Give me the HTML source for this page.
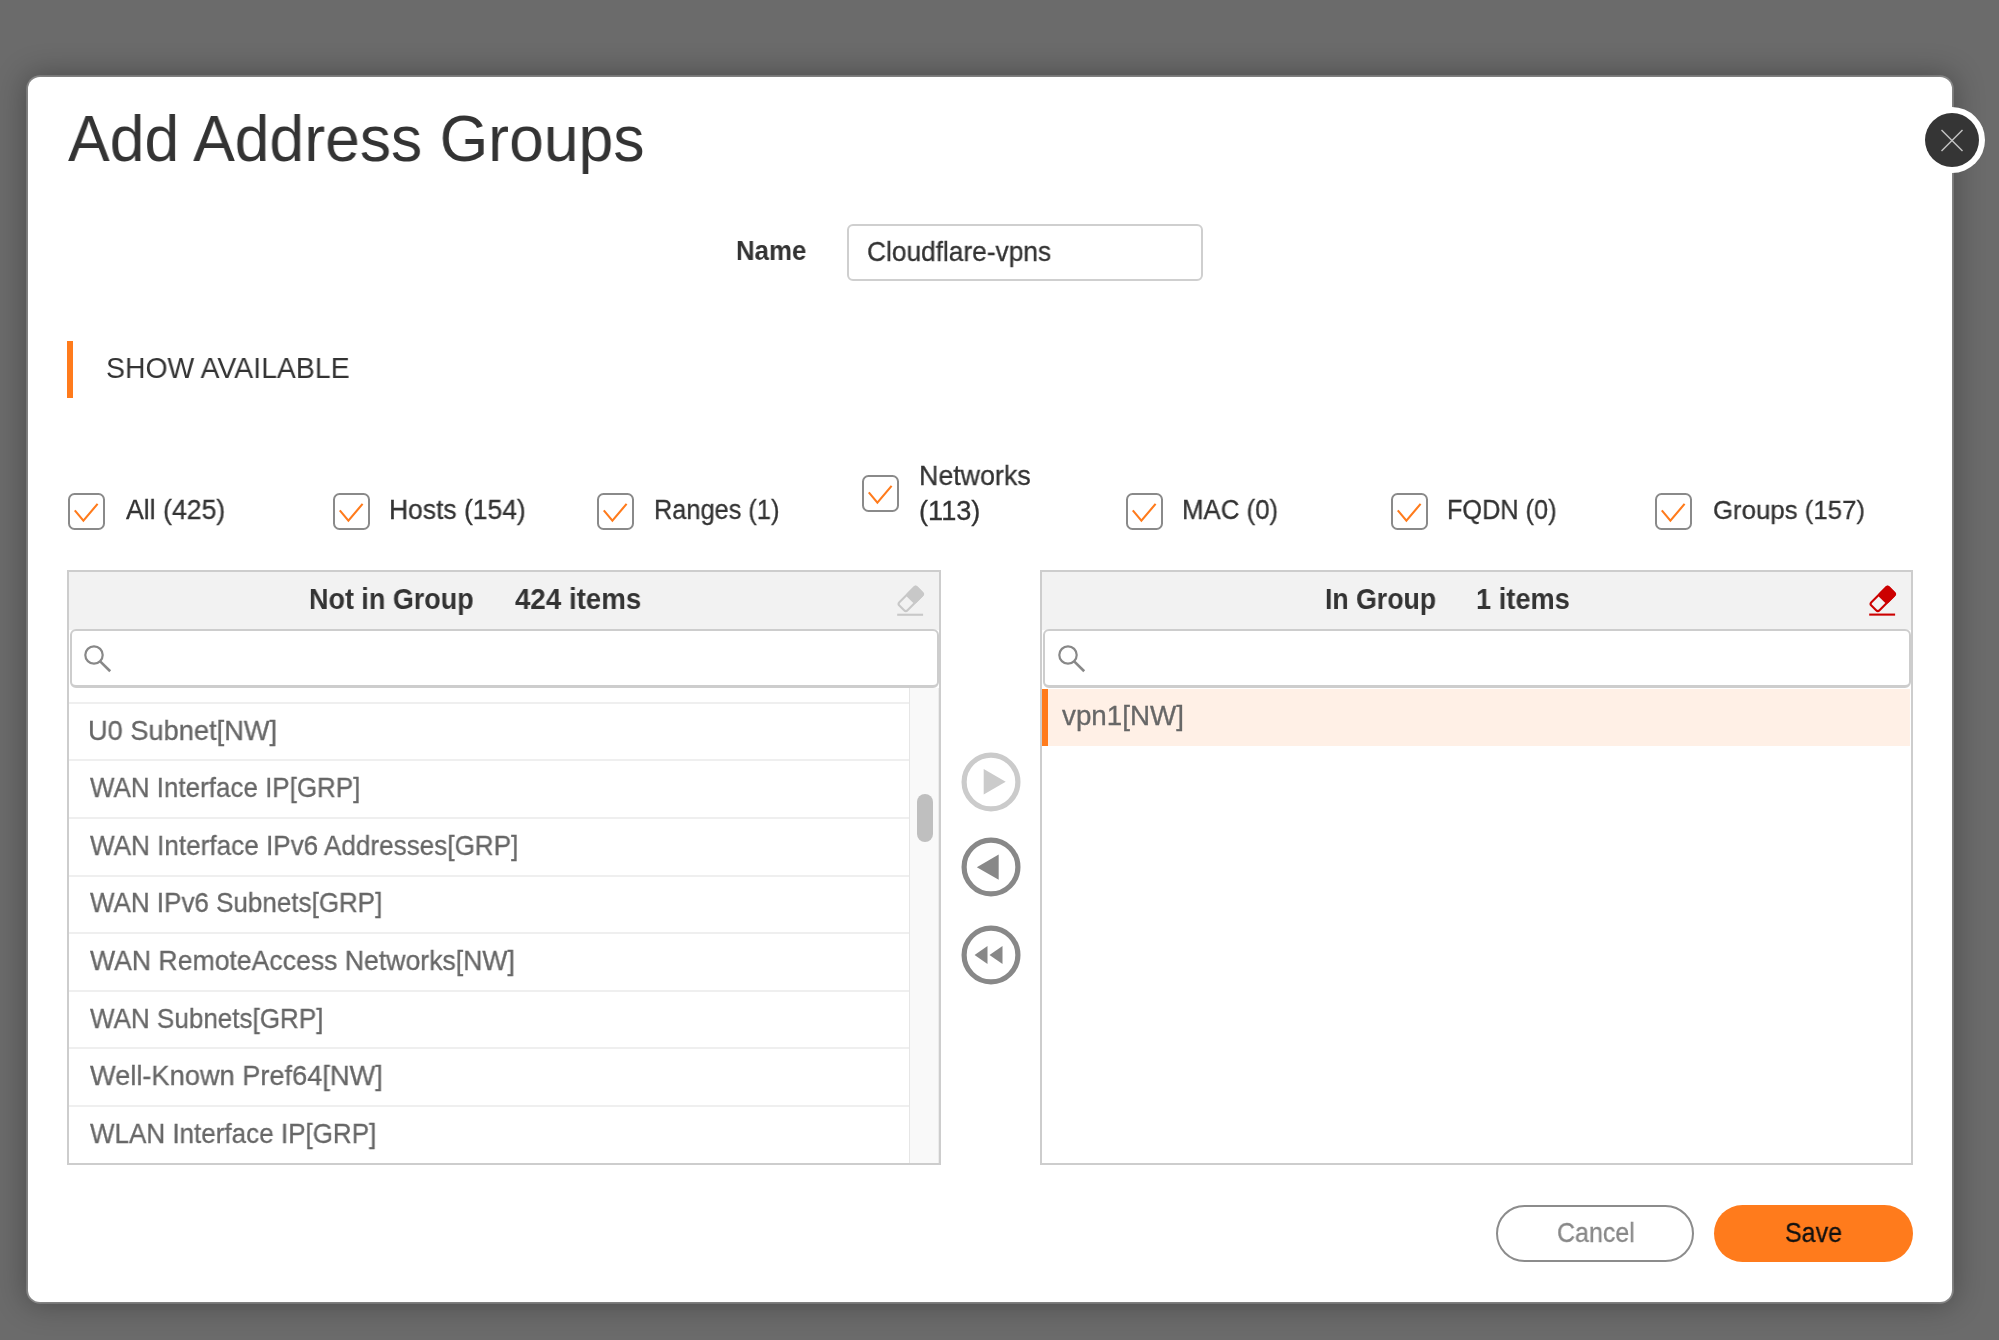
<!DOCTYPE html>
<html><head><meta charset="utf-8">
<style>
*{box-sizing:border-box;margin:0;padding:0}
html,body{width:1999px;height:1340px;overflow:hidden;background:#6b6b6b;font-family:"Liberation Sans",sans-serif;position:relative}
.abs{position:absolute}
.t{position:absolute;white-space:nowrap;line-height:1;transform-origin:0 0;font-family:"Liberation Sans",sans-serif;will-change:transform}
#modal{position:absolute;left:27.8px;top:77px;width:1924.5px;height:1225px;background:#fff;border-radius:12px;box-shadow:0 0 0 1.8px rgba(255,255,255,0.24),0 0 30px 3px rgba(0,0,0,0.3)}
#close{position:absolute;left:1919.4px;top:106.5px;width:66px;height:66px;border-radius:50%;background:#fff}
#close .in{position:absolute;left:6px;top:6px;width:54px;height:54px;border-radius:50%;background:#353535}
</style></head><body>
<div id="modal"></div>
<div id="close"><div class="in"></div><svg class="abs" style="left:0;top:0" width="66" height="66" viewBox="0 0 66 66"><line x1="22.5" y1="23" x2="43.5" y2="44" stroke="#c4c4c4" stroke-width="1.4"/><line x1="43.5" y1="23" x2="22.5" y2="44" stroke="#c4c4c4" stroke-width="1.4"/></svg></div>
<div class="t" style="left:68.0px;top:106.94px;font-size:64.78px;letter-spacing:0px;font-weight:normal;color:#333;transform:scaleX(0.9647)">Add Address Groups</div>
<div class="t" style="left:735.67px;top:238.21px;font-size:26.81px;letter-spacing:0px;font-weight:bold;color:#333;transform:scaleX(0.9643)">Name</div>
<div class="abs" style="left:846.5px;top:223.5px;width:356px;height:57px;border:2px solid #cfcfcf;border-radius:6px"></div>
<div class="t" style="left:867.04px;top:237.84px;font-size:27.25px;letter-spacing:0px;font-weight:normal;color:#333;-webkit-text-stroke:0.3px #333;transform:scaleX(0.9646)">Cloudflare-vpns</div>
<div class="abs" style="left:67.2px;top:340.5px;width:6.3px;height:57.3px;background:#ff7b1c"></div>
<div class="t" style="left:105.75px;top:353.84px;font-size:29.13px;letter-spacing:0px;font-weight:normal;color:#333;transform:scaleX(0.9749)">SHOW AVAILABLE</div>
<svg class="abs" style="left:68px;top:492.7px" width="37" height="37" viewBox="0 0 37 37"><rect x="1" y="1" width="35" height="35" rx="5.5" fill="#fff" stroke="#8a8a8a" stroke-width="2"/><polyline points="6.8,17.4 15.4,27.6 29.6,10.9" fill="none" stroke="#ff7b1c" stroke-width="2.1"/></svg>
<svg class="abs" style="left:333.2px;top:492.7px" width="37" height="37" viewBox="0 0 37 37"><rect x="1" y="1" width="35" height="35" rx="5.5" fill="#fff" stroke="#8a8a8a" stroke-width="2"/><polyline points="6.8,17.4 15.4,27.6 29.6,10.9" fill="none" stroke="#ff7b1c" stroke-width="2.1"/></svg>
<svg class="abs" style="left:596.8px;top:492.7px" width="37" height="37" viewBox="0 0 37 37"><rect x="1" y="1" width="35" height="35" rx="5.5" fill="#fff" stroke="#8a8a8a" stroke-width="2"/><polyline points="6.8,17.4 15.4,27.6 29.6,10.9" fill="none" stroke="#ff7b1c" stroke-width="2.1"/></svg>
<svg class="abs" style="left:862px;top:474.8px" width="37" height="37" viewBox="0 0 37 37"><rect x="1" y="1" width="35" height="35" rx="5.5" fill="#fff" stroke="#8a8a8a" stroke-width="2"/><polyline points="6.8,17.4 15.4,27.6 29.6,10.9" fill="none" stroke="#ff7b1c" stroke-width="2.1"/></svg>
<svg class="abs" style="left:1126.1px;top:492.7px" width="37" height="37" viewBox="0 0 37 37"><rect x="1" y="1" width="35" height="35" rx="5.5" fill="#fff" stroke="#8a8a8a" stroke-width="2"/><polyline points="6.8,17.4 15.4,27.6 29.6,10.9" fill="none" stroke="#ff7b1c" stroke-width="2.1"/></svg>
<svg class="abs" style="left:1391.4px;top:492.7px" width="37" height="37" viewBox="0 0 37 37"><rect x="1" y="1" width="35" height="35" rx="5.5" fill="#fff" stroke="#8a8a8a" stroke-width="2"/><polyline points="6.8,17.4 15.4,27.6 29.6,10.9" fill="none" stroke="#ff7b1c" stroke-width="2.1"/></svg>
<svg class="abs" style="left:1655px;top:492.7px" width="37" height="37" viewBox="0 0 37 37"><rect x="1" y="1" width="35" height="35" rx="5.5" fill="#fff" stroke="#8a8a8a" stroke-width="2"/><polyline points="6.8,17.4 15.4,27.6 29.6,10.9" fill="none" stroke="#ff7b1c" stroke-width="2.1"/></svg>
<div class="t" style="left:125.5px;top:497.21px;font-size:26.81px;letter-spacing:0px;font-weight:normal;color:#333;-webkit-text-stroke:0.3px #333;transform:scaleX(0.9949)">All (425)</div>
<div class="t" style="left:388.83px;top:497.21px;font-size:26.81px;letter-spacing:0px;font-weight:normal;color:#333;-webkit-text-stroke:0.3px #333;transform:scaleX(0.9874)">Hosts (154)</div>
<div class="t" style="left:653.51px;top:497.21px;font-size:26.81px;letter-spacing:0px;font-weight:normal;color:#333;-webkit-text-stroke:0.3px #333;transform:scaleX(0.9457)">Ranges (1)</div>
<div class="t" style="left:918.55px;top:462.09px;font-size:27.54px;letter-spacing:0px;font-weight:normal;color:#333;-webkit-text-stroke:0.3px #333;transform:scaleX(0.9732)">Networks</div>
<div class="t" style="left:919.17px;top:498.21px;font-size:26.81px;letter-spacing:0px;font-weight:normal;color:#333;-webkit-text-stroke:0.3px #333;transform:scaleX(1.014)">(113)</div>
<div class="t" style="left:1182.47px;top:497.21px;font-size:26.81px;letter-spacing:0px;font-weight:normal;color:#333;-webkit-text-stroke:0.3px #333;transform:scaleX(0.9635)">MAC (0)</div>
<div class="t" style="left:1447.41px;top:497.21px;font-size:26.81px;letter-spacing:0px;font-weight:normal;color:#333;-webkit-text-stroke:0.3px #333;transform:scaleX(0.9434)">FQDN (0)</div>
<div class="t" style="left:1712.73px;top:497.26px;font-size:26.52px;letter-spacing:0px;font-weight:normal;color:#333;-webkit-text-stroke:0.3px #333;transform:scaleX(0.9721)">Groups (157)</div>
<div class="abs" style="left:67.3px;top:570px;width:873.5px;height:595px;border:2px solid #cdcdcd;background:#fff"></div><div class="abs" style="left:69.3px;top:572px;width:869.5px;height:58px;background:#f2f2f2"></div><div class="abs" style="left:69.6px;top:629.3px;width:869.2px;height:59px;background:#fff;border:2px solid #cdcdcd;border-bottom-width:3.2px;border-radius:6px"></div>
<div class="abs" style="left:1040.4px;top:570px;width:872.2px;height:595px;border:2px solid #cdcdcd;background:#fff"></div><div class="abs" style="left:1042.4px;top:572px;width:868.2px;height:58px;background:#f2f2f2"></div><div class="abs" style="left:1042.7px;top:629.3px;width:867.9000000000001px;height:59px;background:#fff;border:2px solid #cdcdcd;border-bottom-width:3.2px;border-radius:6px"></div>
<div class="abs" style="left:69.3px;top:688.4px;width:840px;height:474.6px;overflow:hidden">
<div class="abs" style="left:0;top:13.40px;width:840px;height:2px;background:#efefef"></div>
<div class="abs" style="left:0;top:71.00px;width:840px;height:2px;background:#efefef"></div>
<div class="abs" style="left:0;top:128.60px;width:840px;height:2px;background:#efefef"></div>
<div class="abs" style="left:0;top:186.20px;width:840px;height:2px;background:#efefef"></div>
<div class="abs" style="left:0;top:243.80px;width:840px;height:2px;background:#efefef"></div>
<div class="abs" style="left:0;top:301.40px;width:840px;height:2px;background:#efefef"></div>
<div class="abs" style="left:0;top:359.00px;width:840px;height:2px;background:#efefef"></div>
<div class="abs" style="left:0;top:416.60px;width:840px;height:2px;background:#efefef"></div>
<div class="abs" style="left:0;top:474.20px;width:840px;height:2px;background:#efefef"></div>
</div>
<div class="t" style="left:88.04px;top:716.54px;font-size:27.83px;letter-spacing:0px;font-weight:normal;color:#676767;-webkit-text-stroke:0.3px #676767;transform:scaleX(0.9783)">U0 Subnet[NW]</div>
<div class="t" style="left:90.0px;top:774.14px;font-size:27.83px;letter-spacing:0px;font-weight:normal;color:#676767;-webkit-text-stroke:0.3px #676767;transform:scaleX(0.933)">WAN Interface IP[GRP]</div>
<div class="t" style="left:90.0px;top:831.74px;font-size:27.83px;letter-spacing:0px;font-weight:normal;color:#676767;-webkit-text-stroke:0.3px #676767;transform:scaleX(0.9378)">WAN Interface IPv6 Addresses[GRP]</div>
<div class="t" style="left:90.0px;top:889.34px;font-size:27.83px;letter-spacing:0px;font-weight:normal;color:#676767;-webkit-text-stroke:0.3px #676767;transform:scaleX(0.9341)">WAN IPv6 Subnets[GRP]</div>
<div class="t" style="left:90.0px;top:946.94px;font-size:27.83px;letter-spacing:0px;font-weight:normal;color:#676767;-webkit-text-stroke:0.3px #676767;transform:scaleX(0.9563)">WAN RemoteAccess Networks[NW]</div>
<div class="t" style="left:90.0px;top:1004.54px;font-size:27.83px;letter-spacing:0px;font-weight:normal;color:#676767;-webkit-text-stroke:0.3px #676767;transform:scaleX(0.9355)">WAN Subnets[GRP]</div>
<div class="t" style="left:90.4px;top:1062.14px;font-size:27.83px;letter-spacing:0px;font-weight:normal;color:#676767;-webkit-text-stroke:0.3px #676767;transform:scaleX(0.9775)">Well-Known Pref64[NW]</div>
<div class="t" style="left:90.0px;top:1119.74px;font-size:27.83px;letter-spacing:0px;font-weight:normal;color:#676767;-webkit-text-stroke:0.3px #676767;transform:scaleX(0.9349)">WLAN Interface IP[GRP]</div>
<div class="abs" style="left:909.3px;top:688.4px;width:29.5px;height:474.6px;background:#f9f9f9;border-left:1.6px solid #e6e6e6;border-right:1px solid #ececec"></div>
<div class="abs" style="left:917px;top:794px;width:16px;height:47.6px;border-radius:8px;background:#bfbfbf"></div>
<div class="abs" style="left:1042.4px;top:688.6px;width:867.6px;height:57.4px;background:#fff0e6"></div>
<div class="abs" style="left:1042.2px;top:688.6px;width:6px;height:57.4px;background:#ff7b1c"></div>
<div class="t" style="left:1062.2px;top:702.17px;font-size:27.1px;letter-spacing:0px;font-weight:normal;color:#676767;-webkit-text-stroke:0.3px #676767;transform:scaleX(1.0256)">vpn1[NW]</div>
<div class="t" style="left:309.34px;top:585.26px;font-size:28.99px;letter-spacing:0px;font-weight:bold;color:#333;transform:scaleX(0.9293)">Not in Group</div>
<div class="t" style="left:515.2px;top:585.26px;font-size:28.99px;letter-spacing:0px;font-weight:bold;color:#333;transform:scaleX(0.9557)">424 items</div>
<div class="t" style="left:1324.96px;top:585.26px;font-size:28.99px;letter-spacing:0px;font-weight:bold;color:#333;transform:scaleX(0.9203)">In Group</div>
<div class="t" style="left:1476.12px;top:585.26px;font-size:28.99px;letter-spacing:0px;font-weight:bold;color:#333;transform:scaleX(0.9392)">1 items</div>
<svg class="abs" style="left:897.10px;top:585.30px" width="32" height="34" viewBox="0 0 32 34"><g transform="translate(13.7,14) rotate(-45)"><rect x="-12.65" y="-5.75" width="25.3" height="11.5" rx="2.4" fill="none" stroke="#c8c8c8" stroke-width="2.1"/><rect x="-1" y="-6.8" width="14.7" height="13.6" rx="2.8" fill="#c8c8c8"/></g><rect x="0.2" y="28.70" width="25.9" height="2.1" fill="#c8c8c8"/></svg>
<svg class="abs" style="left:1869.00px;top:585.45px" width="32" height="34" viewBox="0 0 32 34"><g transform="translate(13.7,14) rotate(-45)"><rect x="-12.65" y="-5.75" width="25.3" height="11.5" rx="2.4" fill="none" stroke="#cc0000" stroke-width="2.1"/><rect x="-1" y="-6.8" width="14.7" height="13.6" rx="2.8" fill="#cc0000"/></g><rect x="0.2" y="28.55" width="25.9" height="2.1" fill="#cc0000"/></svg>
<svg class="abs" style="left:82.4px;top:643.1px" width="30" height="30" viewBox="0 0 30 30"><circle cx="12" cy="12" r="8.7" fill="none" stroke="#888" stroke-width="2.2"/><line x1="18.4" y1="18.6" x2="28.2" y2="28.2" stroke="#888" stroke-width="2.6"/></svg>
<svg class="abs" style="left:1055.6px;top:643.1px" width="30" height="30" viewBox="0 0 30 30"><circle cx="12" cy="12" r="8.7" fill="none" stroke="#888" stroke-width="2.2"/><line x1="18.4" y1="18.6" x2="28.2" y2="28.2" stroke="#888" stroke-width="2.6"/></svg>
<svg class="abs" style="left:959.5px;top:751px" width="62" height="62" viewBox="0 0 62 62"><circle cx="31" cy="31" r="26.9" fill="none" stroke="#cbcbcb" stroke-width="5.2"/><polygon points="23.7,18 45.7,30.8 23.7,43.6" fill="#cbcbcb"/></svg>
<svg class="abs" style="left:959.5px;top:835.5px" width="62" height="62" viewBox="0 0 62 62"><circle cx="31" cy="31" r="26.9" fill="none" stroke="#888888" stroke-width="5.2"/><polygon points="16.8,31.2 38.7,18.4 38.7,43.7" fill="#888888"/></svg>
<svg class="abs" style="left:959.5px;top:923.5px" width="62" height="62" viewBox="0 0 62 62"><circle cx="31" cy="31" r="26.9" fill="none" stroke="#888888" stroke-width="5.2"/><polygon points="14.6,31 27.5,22 27.5,40" fill="#888888"/><polygon points="29.5,31 42.5,22 42.5,40" fill="#888888"/></svg>
<div class="abs" style="left:1496px;top:1205px;width:197.7px;height:57px;border:2px solid #8c8c8c;border-radius:29px"></div>
<div class="t" style="left:1556.68px;top:1219.07px;font-size:27.1px;letter-spacing:0px;font-weight:normal;color:#888;-webkit-text-stroke:0.3px #888;transform:scaleX(0.922)">Cancel</div>
<div class="abs" style="left:1713.6px;top:1205px;width:199.2px;height:57px;border-radius:29px;background:#ff7b1c"></div>
<div class="t" style="left:1784.68px;top:1218.79px;font-size:27.54px;letter-spacing:0px;font-weight:normal;color:#111;-webkit-text-stroke:0.3px #111;transform:scaleX(0.9083)">Save</div>
</body></html>
